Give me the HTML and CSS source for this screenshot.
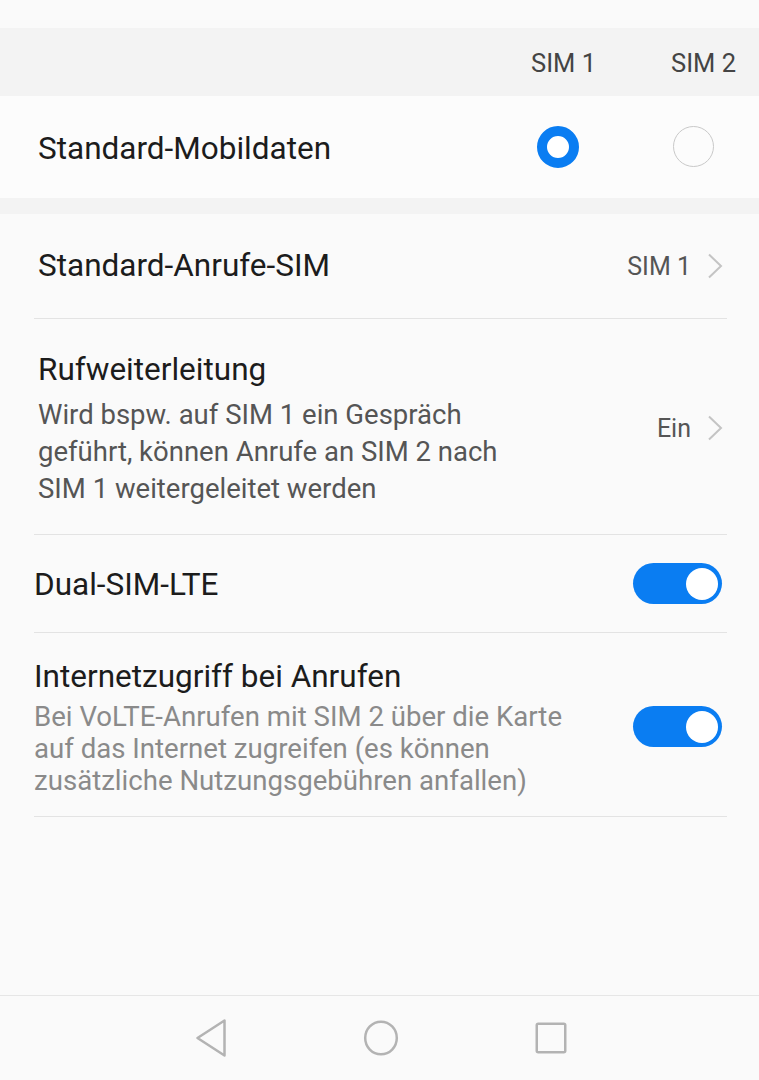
FILE: index.html
```html
<!DOCTYPE html>
<html lang="de">
<head>
  <meta charset="UTF-8">
  <title>Dual-SIM-Einstellungen</title>
  <link rel="stylesheet" href="styles.css">
</head>
<body>
  <div class="screen">
    <div class="top-space"></div>

    <!-- Kopfzeile SIM 1 / SIM 2 -->
    <div class="sim-head">
      <span>SIM 1</span>
      <span>SIM 2</span>
    </div>

    <div class="radio-row">
      <span class="title">Standard-Mobildaten</span>
      <div class="radios">
        <span class="radio checked"></span>
        <span class="radio"></span>
      </div>
    </div>

    <div class="gap"></div>

    <div class="list">
      <div class="item item-inset item-calls">
        <span class="title">Standard-Anrufe-SIM</span>
        <span class="value">SIM 1
          <svg class="chevron" width="16" height="26" viewBox="0 0 16 26"><polyline points="2,1.5 14,13 2,24.5" fill="none" stroke="#c4c4c4" stroke-width="2"/></svg>
        </span>
      </div>

      <div class="item item-inset item-forward">
        <div class="text">
          <div class="title">Rufweiterleitung</div>
          <div class="sub">Wird bspw. auf SIM 1 ein Gespräch<br>geführt, können Anrufe an SIM 2 nach<br>SIM 1 weitergeleitet werden</div>
        </div>
        <span class="value">Ein
          <svg class="chevron" width="16" height="26" viewBox="0 0 16 26"><polyline points="2,1.5 14,13 2,24.5" fill="none" stroke="#c4c4c4" stroke-width="2"/></svg>
        </span>
      </div>

      <div class="item item-lte">
        <span class="title">Dual-SIM-LTE</span>
        <span class="switch on"></span>
      </div>

      <div class="item item-internet">
        <div class="text">
          <div class="title">Internetzugriff bei Anrufen</div>
          <div class="sub light">Bei VoLTE-Anrufen mit SIM 2 über die Karte<br>auf das Internet zugreifen (es können<br>zusätzliche Nutzungsgebühren anfallen)</div>
        </div>
        <span class="switch on"></span>
      </div>
    </div>

    <!-- Navigationsleiste -->
    <div class="navbar">
      <span class="nav-btn">
        <svg width="34" height="38" viewBox="0 0 34 38">
          <path d="M30.5 1.5 L30.5 36.5 L3.5 19 Z" fill="none" stroke="#b3b3b3" stroke-width="2.5" stroke-linejoin="round"/>
        </svg>
      </span>
      <span class="nav-btn">
        <svg width="38" height="38" viewBox="0 0 38 38">
          <ellipse cx="19" cy="19" rx="15.8" ry="16.3" fill="none" stroke="#b3b3b3" stroke-width="2.5"/>
        </svg>
      </span>
      <span class="nav-btn">
        <svg width="34" height="34" viewBox="0 0 34 34">
          <rect x="2.75" y="2.75" width="28.5" height="28.5" rx="1.5" fill="none" stroke="#b3b3b3" stroke-width="2.5"/>
        </svg>
      </span>
    </div>
  </div>
</body>
</html>
```

FILE: styles.css
```css
body {
  margin: 0;
  background: #fafafa;
  font-family: Roboto, "Noto Sans", sans-serif;
  color: #1c1c1c;
}
.screen {
  height: 1080px;
  display: flex;
  flex-direction: column;
}
.top-space {
  height: 28px;
}
.sim-head {
  height: 68px;
  box-sizing: border-box;
  padding: 2px 23px 0 0;
  background: #f3f3f3;
  display: flex;
  justify-content: flex-end;
  align-items: center;
  gap: 75px;
  font-size: 25.5px;
  color: #444;
}
.radio-row {
  height: 102px;
  box-sizing: border-box;
  background: #fcfcfc;
  display: flex;
  align-items: center;
  justify-content: space-between;
  padding: 0 45px 0 38px;
}
.radio-row .title {
  padding-top: 3px;
}
.title {
  font-size: 31.5px;
  line-height: 40px;
  color: #1c1c1c;
}
.radios {
  display: flex;
  gap: 94px;
}
.radio {
  width: 39px;
  height: 39px;
  border: 1.5px solid #c9c9c9;
  border-radius: 50%;
  box-sizing: content-box;
}
.radio.checked {
  width: 22px;
  height: 22px;
  border: 10px solid #0a7df2;
  background: #fff;
}
.gap {
  height: 16px;
  background: #f3f3f3;
}
.list {
  flex: 1;
  margin: 0 32px 0 34px;
}
.item {
  display: flex;
  align-items: center;
  justify-content: space-between;
  box-sizing: border-box;
  border-bottom: 1px solid #e3e3e3;
  padding-right: 5px;
}
.item-inset {
  padding-left: 4px;
  padding-right: 4px;
}
.item-calls {
  height: 105px;
}
.item-forward {
  height: 216px;
  padding-top: 3px;
}
.item-lte {
  height: 98px;
  padding-top: 3px;
}
.item-internet {
  height: 184px;
  padding-top: 4px;
}
.item .title {
  display: block;
}
.sub {
  font-size: 27.5px;
  line-height: 37px;
  color: #555;
  margin-top: 6px;
}
.sub.light {
  font-size: 27.6px;
  line-height: 32px;
  color: #8a8a8a;
  margin-top: 4px;
}
.value {
  display: flex;
  align-items: center;
  gap: 16px;
  font-size: 25px;
  color: #555;
}
.chevron {
  display: block;
}
.item-lte .switch {
  margin-top: -3px;
}
.switch {
  position: relative;
  width: 89px;
  height: 41px;
  border-radius: 21px;
  background: #0a7df2;
  flex-shrink: 0;
}
.switch::after {
  content: "";
  position: absolute;
  top: 4.5px;
  right: 4.5px;
  width: 32px;
  height: 32px;
  border-radius: 50%;
  background: #fff;
}
.navbar {
  height: 84px;
  border-top: 1px solid #e6e6e6;
  display: flex;
  align-items: center;
  justify-content: center;
  padding-left: 3px;
}
.nav-btn {
  width: 170px;
  display: flex;
  justify-content: center;
}
.nav-btn svg {
  display: block;
}
```
